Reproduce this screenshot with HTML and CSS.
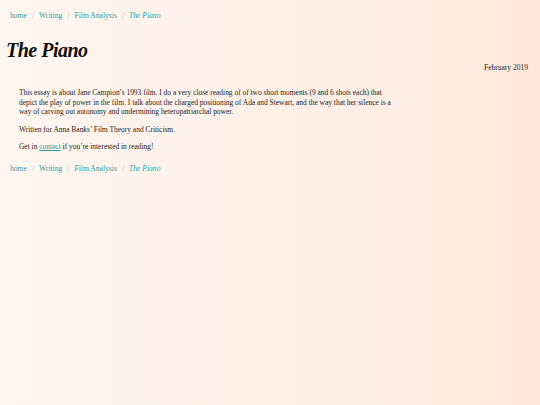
FILE: index.html
```html
<!DOCTYPE html>
<html lang="en">
<head>
<meta charset="utf-8">
<title>The Piano</title>
<link rel="stylesheet" href="styles.css">
</head>
<body>
<div class="page">
  <nav class="crumbs">
    <a href="#">home</a><span class="sep">/</span><a href="#">Writing</a><span class="sep">/</span><a href="#">Film Analysis</a><span class="sep">/</span><a href="#" class="current">The Piano</a>
  </nav>
  <header class="head">
    <h1 class="title">The Piano</h1>
    <div class="date">February 2019</div>
  </header>
  <main class="body">
    <p>This essay is about Jane Campion’s 1993 film. I do a very close reading of of two short moments (9 and 6 shots each) that depict the play of power in the film. I talk about the charged positioning of Ada and Stewart, and the way that her silence is a way of carving out autonomy and undermining heteropatriarchal power.</p>
    <p>Written for Anna Banks’ Film Theory and Criticism.</p>
    <p>Get in <a href="#" class="inline">contact</a> if you’re interested in reading!</p>
  </main>
  <nav class="crumbs">
    <a href="#">home</a><span class="sep">/</span><a href="#">Writing</a><span class="sep">/</span><a href="#">Film Analysis</a><span class="sep">/</span><a href="#" class="current">The Piano</a>
  </nav>
</div>
</body>
</html>
```
FILE: styles.css
```css
html, body {
  margin: 0;
  padding: 0;
}
body {
  width: 540px;
  height: 405px;
  background: linear-gradient(to right, #fff6ef 0%, #fef0e7 55%, #fde8dc 100%);
  font-family: "Liberation Serif", "DejaVu Serif", serif;
  color: #222;
  overflow: hidden;
}
.page {
  display: flex;
  flex-direction: column;
}
.crumbs {
  padding: 10px 10px 0 10px;
  font-size: 7.6px;
  line-height: 11px;
  color: #9bbcbc;
}
.crumbs a {
  color: #2c9ea0;
  text-decoration: none;
}
.crumbs .current {
  font-style: italic;
}
.sep {
  margin: 0 5px;
  color: #9bbcbc;
}
.head {
  display: flex;
  justify-content: space-between;
  align-items: flex-end;
  padding: 17px 12px 0 6px;
}
.title {
  margin: 0;
  font-size: 20px;
  line-height: 24px;
  font-style: italic;
  font-weight: bold;
  color: #111;
  letter-spacing: -0.5px;
}
.date {
  font-size: 7.5px;
  line-height: 9px;
  margin-bottom: -10px;
}
.body {
  padding: 26px 0 0 19px;
  width: 378px;
  font-size: 7.45px;
  line-height: 9.6px;
}
.body p {
  margin: 0 0 8px 0;
}
.inline {
  color: #2c9ea0;
  text-decoration: underline;
}
.page > .crumbs:last-child {
  padding-top: 3px;
}
```
